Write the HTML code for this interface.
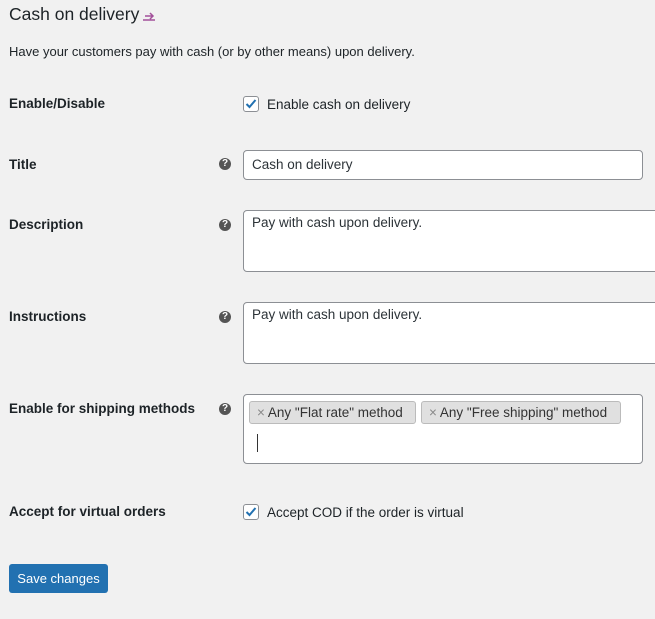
<!DOCTYPE html>
<html><head><meta charset="utf-8"><style>
body{margin:0;width:655px;height:619px;background:#f1f1f1;font-family:"Liberation Sans",sans-serif;color:#1d2327;font-size:13px;position:relative;overflow:hidden}
.a{position:absolute}
.lbl{font-weight:bold;font-size:13.5px;left:9px}
.help{width:12px;height:12px;border-radius:50%;background:#555;color:#fff;font-size:10px;font-weight:bold;text-align:center;line-height:12px;left:219px}
.in{background:#fff;border:1px solid #8c8f94;border-radius:4px;box-sizing:border-box;left:243px;padding:6px 8px;font-size:13.5px;color:#2c3338}
.cb{width:14px;height:14px;border:1px solid #8c8f94;border-radius:3px;background:#fff;left:243px}
.tag{background:#e0e0e0;border:1px solid #bbb;border-radius:3px;height:23px;box-sizing:border-box;line-height:21px;padding:0 9px 0 7px;font-size:13.5px;color:#333;top:401px}
</style></head><body>
<div class="a" style="left:9px;top:4px;font-size:17.5px">Cash on delivery</div>
<svg class="a" style="left:142px;top:8px" width="14" height="14" viewBox="0 0 14 14"><path d="M1 12h12M3 8h7M8 5l3 3-3 3" stroke="#a3519a" stroke-width="1.5" fill="none"/></svg>
<div class="a" style="left:9px;top:44px;font-size:13px">Have your customers pay with cash (or by other means) upon delivery.</div>
<div class="a lbl" style="top:96px">Enable/Disable</div>
<div class="a cb" style="top:96px"><svg width="14" height="14" viewBox="0 0 14 14"><path d="M2.5 7l3 3 6-7" stroke="#2271b1" stroke-width="2" fill="none"/></svg></div>
<div class="a" style="left:267px;top:97px;font-size:13.5px">Enable cash on delivery</div>
<div class="a lbl" style="top:157px">Title</div><div class="a help" style="top:158px">?</div>
<div class="a in" style="top:150px;width:400px;height:30px">Cash on delivery</div>
<div class="a lbl" style="top:217px">Description</div><div class="a help" style="top:219px">?</div>
<div class="a in" style="top:210px;width:420px;height:62px;padding-top:4px">Pay with cash upon delivery.</div>
<div class="a lbl" style="top:309px">Instructions</div><div class="a help" style="top:311px">?</div>
<div class="a in" style="top:302px;width:420px;height:62px;padding-top:4px">Pay with cash upon delivery.</div>
<div class="a lbl" style="top:401px">Enable for shipping methods</div><div class="a help" style="top:403px">?</div>
<div class="a in" style="top:394px;width:400px;height:70px"></div>
<div class="a tag" style="left:249px;width:167px"><span style="color:#888">×</span> Any "Flat rate" method</div>
<div class="a tag" style="left:421px;width:200px"><span style="color:#888">×</span> Any "Free shipping" method</div>
<div class="a" style="left:257px;top:434px;width:1px;height:18px;background:#333"></div>
<div class="a lbl" style="top:504px">Accept for virtual orders</div>
<div class="a cb" style="top:504px"><svg width="14" height="14" viewBox="0 0 14 14"><path d="M2.5 7l3 3 6-7" stroke="#2271b1" stroke-width="2" fill="none"/></svg></div>
<div class="a" style="left:267px;top:505px;font-size:13.5px">Accept COD if the order is virtual</div>
<div class="a" style="left:9px;top:564px;width:99px;height:29px;background:#2271b1;border-radius:3px;color:#fff;font-size:13px;line-height:29px;text-align:center">Save changes</div>
</body></html>
